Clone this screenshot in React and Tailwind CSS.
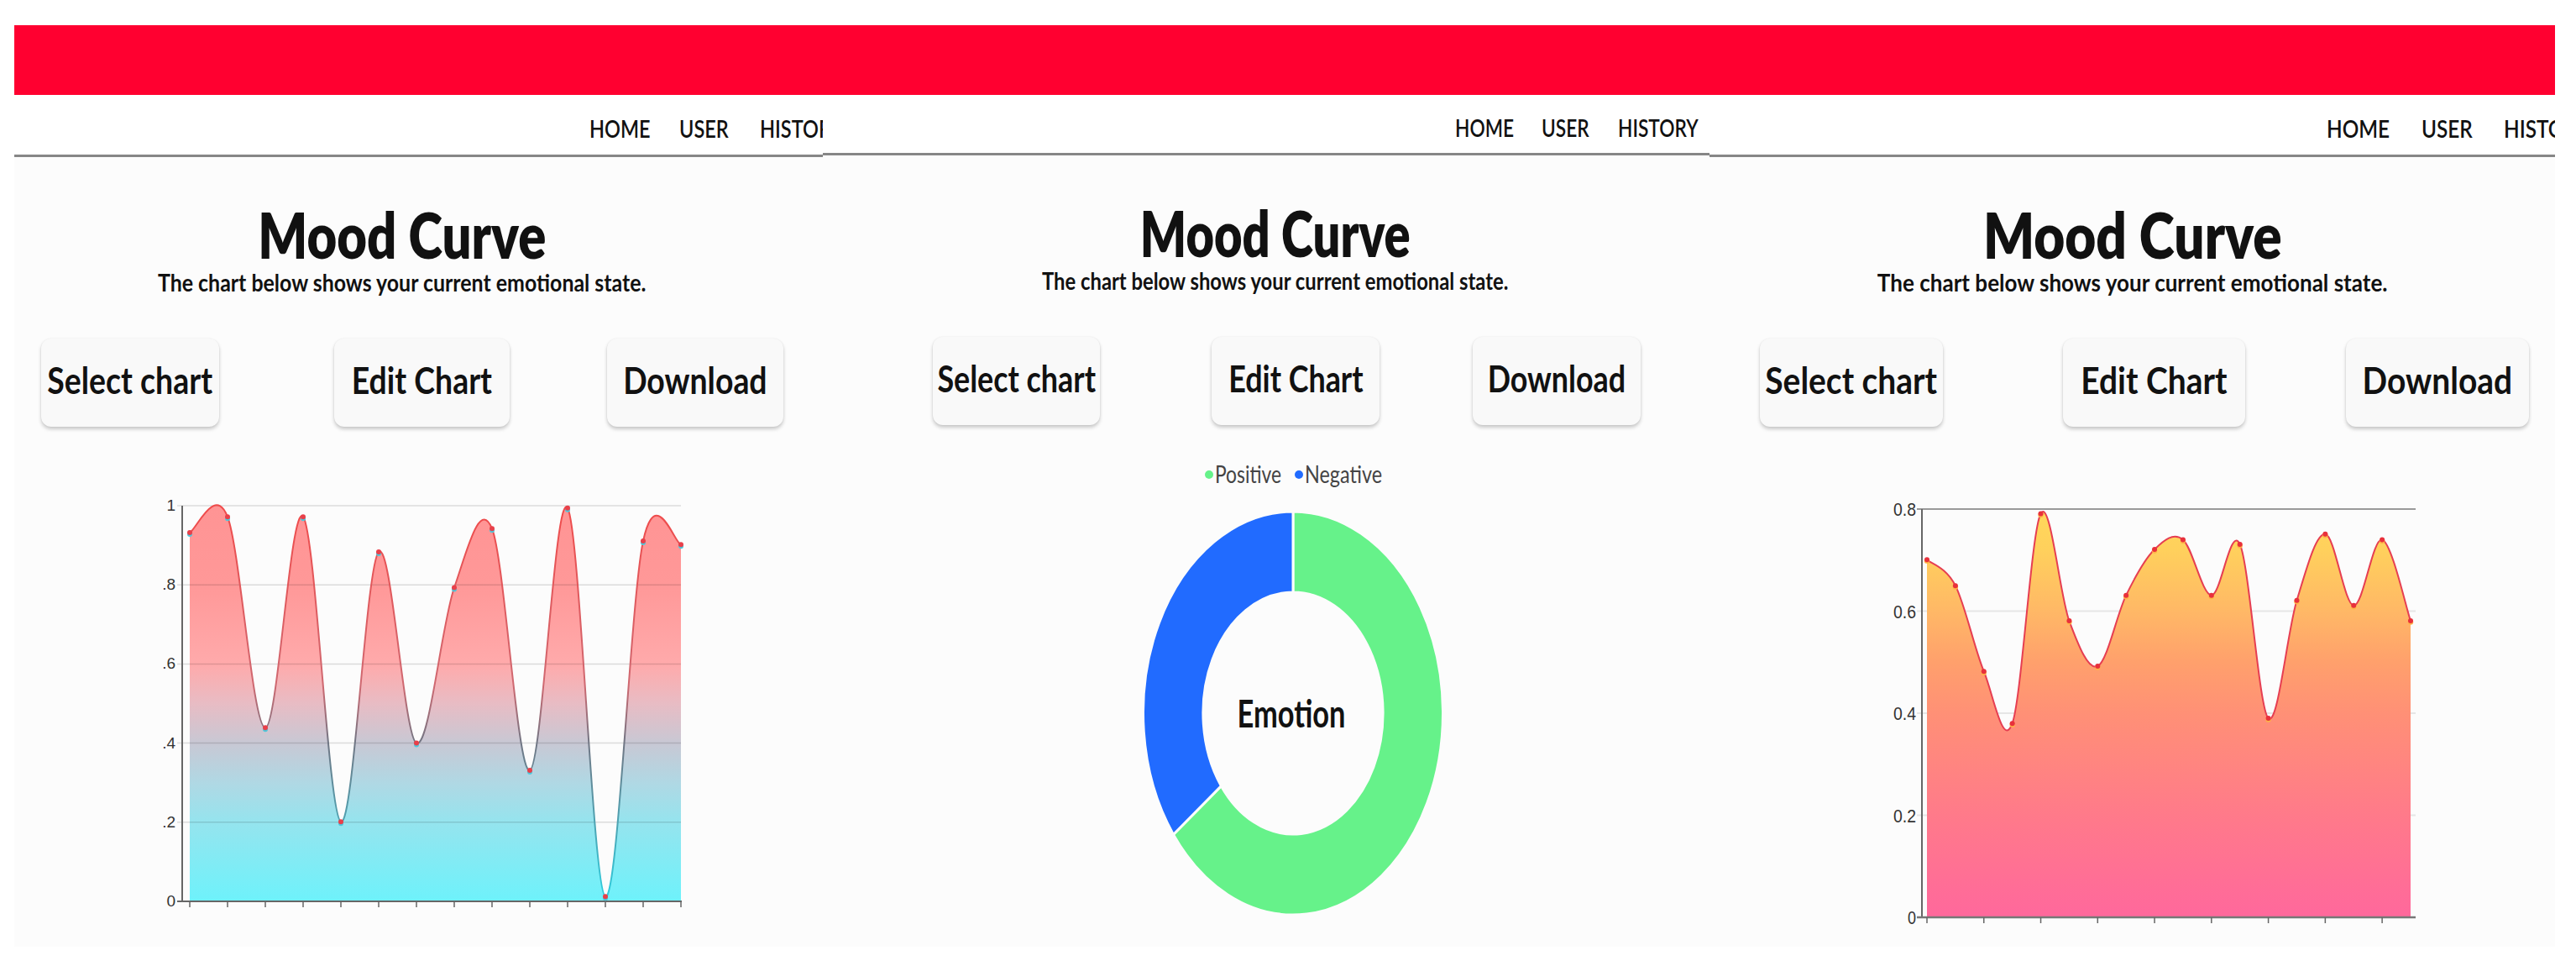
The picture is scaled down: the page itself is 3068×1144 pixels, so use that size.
import React from 'react'

// three phone screens of the same page, side by side
const panels = [
  {
    w: 'w-[963px]',
    navH: 'h-[74px]',
    navPl: 'pl-[685px]',
    navW: ['w-[107px]', 'w-[96px]', 'w-[120px]'],
    sx: 'scale-x-[0.81]',
    navSx: 'scale-x-[0.84]',
    subSx: 'scale-x-[0.89]',
    btnSx: 'scale-x-[0.85]',
    head: 'pr-[40px]',
    btnPl: 'pl-[32px]',
    btns: [
      ['w-[212px]', ''],
      ['w-[209px]', 'ml-[137px]'],
      ['w-[210px]', 'ml-[116px]'],
    ],
  },
  {
    w: 'w-[1056px]',
    navH: 'h-[72px]',
    navPl: 'pl-[753px]',
    navW: ['w-[103px]', 'w-[91px]', 'w-[120px]'],
    sx: 'scale-x-[0.76]',
    navSx: 'scale-x-[0.81]',
    subSx: 'scale-x-[0.85]',
    btnSx: 'scale-x-[0.815]',
    head: 'pl-[22px]',
    btnPl: 'pl-[131px]',
    btns: [
      ['w-[199px]', ''],
      ['w-[200px]', 'ml-[133px]'],
      ['w-[200px]', 'ml-[111px]'],
    ],
  },
  {
    w: 'w-[1007px]',
    navH: 'h-[74px]',
    navPl: 'pl-[735px]',
    navW: ['w-[113px]', 'w-[98px]', 'w-[120px]'],
    sx: 'scale-x-[0.84]',
    navSx: 'scale-x-[0.87]',
    subSx: 'scale-x-[0.93]',
    btnSx: 'scale-x-[0.885]',
    head: '',
    btnPl: 'pl-[60px]',
    btns: [
      ['w-[218px]', ''],
      ['w-[217px]', 'ml-[143px]'],
      ['w-[218px]', 'ml-[120px]'],
    ],
  },
]

const spline = (pts) => {
  let d = `M${pts[0][0]},${pts[0][1]}`
  for (let i = 0; i < pts.length - 1; i++) {
    const p0 = pts[i - 1] || pts[i]
    const p1 = pts[i]
    const p2 = pts[i + 1]
    const p3 = pts[i + 2] || p2
    const c1 = [p1[0] + (p2[0] - p0[0]) / 6, p1[1] + (p2[1] - p0[1]) / 6]
    const c2 = [p2[0] - (p3[0] - p1[0]) / 6, p2[1] - (p3[1] - p1[1]) / 6]
    d += ` C${c1[0]},${c1[1]} ${c2[0]},${c2[1]} ${p2[0]},${p2[1]}`
  }
  return d
}

const moodA = [0.932, 0.972, 0.439, 0.972, 0.201, 0.883, 0.4, 0.793, 0.942, 0.331, 0.994, 0.012, 0.911, 0.902]
const moodB = [0.701, 0.65, 0.482, 0.38, 0.791, 0.581, 0.492, 0.631, 0.721, 0.74, 0.631, 0.731, 0.39, 0.621, 0.751, 0.611, 0.74, 0.581]

const CyanChart = () => {
  const zero = 565
  const top = 94
  const ppu = zero - top
  const pts = moodA.map((v, i) => [209 + i * 45, zero - v * ppu])
  const line = spline(pts)
  const area = `${line} L794,${zero} L209,${zero}Z`
  const grid = [1, 0.8, 0.6, 0.4, 0.2]
  return (
    <svg width="963" height="617" className="block">
      <defs>
        <linearGradient id="fillA" gradientUnits="userSpaceOnUse" x1="0" y1={top} x2="0" y2={zero}>
          <stop offset="0" stopColor="#ff9494" />
          <stop offset="0.2" stopColor="#ff9898" />
          <stop offset="0.4" stopColor="#ffaaab" />
          <stop offset="0.5" stopColor="#e8bcc4" />
          <stop offset="0.6" stopColor="#c8c8d4" />
          <stop offset="0.7" stopColor="#b0d8e4" />
          <stop offset="0.8" stopColor="#95e4ee" />
          <stop offset="1" stopColor="#6ef2fb" />
        </linearGradient>
        <linearGradient id="lineA" gradientUnits="userSpaceOnUse" x1="0" y1={top} x2="0" y2={zero}>
          <stop offset="0" stopColor="#f04a4a" />
          <stop offset="0.45" stopColor="#d06870" />
          <stop offset="0.6" stopColor="#707684" />
          <stop offset="1" stopColor="#2ccfe0" />
        </linearGradient>
      </defs>
      <path d={area} fill="url(#fillA)" />
      {grid.map((g) => (
        <line key={g} x1="194" x2="794" y1={zero - g * ppu} y2={zero - g * ppu} stroke="rgba(0,0,0,0.13)" strokeWidth="1.5" />
      ))}
      <path d={line} fill="none" stroke="url(#lineA)" strokeWidth="2" />
      <line x1="200" x2="200" y1={top} y2={zero} stroke="#666" strokeWidth="2" />
      <line x1="194" x2="795" y1={zero} y2={zero} stroke="#666" strokeWidth="2" />
      {pts.map(([x]) => (
        <line key={x} x1={x} x2={x} y1={zero} y2={zero + 7} stroke="#666" strokeWidth="1.5" />
      ))}
      {['1', '.8', '.6', '.4', '.2', '0'].map((t, i) => (
        <text key={t} x="192" y={top + i * (ppu / 5) + 6} textAnchor="end" fontSize="19" fill="#333" fontFamily="Liberation Sans, sans-serif">
          {t}
        </text>
      ))}
      {pts.map(([x, y]) => (
        <g key={x}>
          <circle cx={x} cy={y + 2} r="3" fill="#4cc8dc" />
          <circle cx={x} cy={y} r="3" fill="#e8404a" />
        </g>
      ))}
    </svg>
  )
}

const WarmChart = () => {
  const zero = 584
  const top = 98
  const ppu = (zero - top) / 0.8
  const step = 576 / 17
  const pts = moodB.map((v, i) => [259 + i * step, zero - v * ppu])
  const line = spline(pts)
  const area = `${line} L835,${zero} L259,${zero}Z`
  return (
    <svg width="1007" height="617" className="block">
      <defs>
        <linearGradient id="fillB" gradientUnits="userSpaceOnUse" x1="0" y1={top} x2="0" y2={zero}>
          <stop offset="0" stopColor="#ffd85a" />
          <stop offset="0.1" stopColor="#ffd05c" />
          <stop offset="0.25" stopColor="#ffb866" />
          <stop offset="0.375" stopColor="#ffa06c" />
          <stop offset="0.5" stopColor="#ff9076" />
          <stop offset="0.75" stopColor="#ff7a8a" />
          <stop offset="1" stopColor="#ff689c" />
        </linearGradient>
      </defs>
      {[0.6, 0.4, 0.2].map((g) => (
        <line key={g} x1="247" x2="841" y1={zero - g * ppu} y2={zero - g * ppu} stroke="#e6e6e6" strokeWidth="2" />
      ))}
      <line x1="247" x2="841" y1={top} y2={top} stroke="#9a9a9a" strokeWidth="2" />
      <path d={area} fill="url(#fillB)" />
      <path d={line} fill="none" stroke="#e63e52" strokeWidth="2" />
      <line x1="253" x2="253" y1={top} y2={zero} stroke="#666" strokeWidth="2" />
      <line x1="247" x2="841" y1={zero} y2={zero} stroke="#777" strokeWidth="2.5" />
      {pts.filter((_, i) => i % 2 === 0).map(([x]) => (
        <line key={x} x1={x} x2={x} y1={zero} y2={zero + 7} stroke="#666" strokeWidth="1.5" />
      ))}
      {['0.8', '0.6', '0.4', '0.2', '0'].map((t, i) => (
        <text
          key={t}
          x="246"
          y={top + i * 121.5 + 8}
          textAnchor="end"
          fontSize="22"
          fill="#333"
          fontFamily="Liberation Sans, sans-serif"
          textLength={t.length > 1 ? 27 : 10}
          lengthAdjust="spacingAndGlyphs"
        >
          {t}
        </text>
      ))}
      {pts.map(([x, y]) => (
        <g key={x}>
          <circle cx={x} cy={y + 1.5} r="3.2" fill="#ffb347" />
          <circle cx={x} cy={y} r="3" fill="#e8303c" />
        </g>
      ))}
    </svg>
  )
}

const ring = (a0, a1) => {
  const p = (a, r) => [Math.sin(a) * r, -Math.cos(a) * r]
  const large = a1 - a0 > Math.PI ? 1 : 0
  const [ax, ay] = p(a0, 1)
  const [bx, by] = p(a1, 1)
  const [cx, cy] = p(a1, 0.6)
  const [dx, dy] = p(a0, 0.6)
  return `M${ax} ${ay} A1 1 0 ${large} 1 ${bx} ${by} L${cx} ${cy} A0.6 0.6 0 ${large} 0 ${dx} ${dy}Z`
}

const EmotionDonut = () => {
  const split = (233 / 180) * Math.PI
  return (
    <svg width="1056" height="617" className="block">
      <circle cx="460" cy="59" r="5" fill="#66f28a" />
      <text x="467" y="69" fontSize="28" fill="#444" fontFamily="Lato, sans-serif" textLength="79" lengthAdjust="spacingAndGlyphs">
        Positive
      </text>
      <circle cx="567" cy="59" r="5" fill="#216bff" />
      <text x="574" y="69" fontSize="28" fill="#444" fontFamily="Lato, sans-serif" textLength="92" lengthAdjust="spacingAndGlyphs">
        Negative
      </text>
      <g transform="translate(560 343) scale(178.5 240)">
        <path d={ring(0, split)} fill="#66f28a" stroke="#fcfcfc" strokeWidth="3" vectorEffect="non-scaling-stroke" strokeLinejoin="round" />
        <path d={ring(split, Math.PI * 2)} fill="#216bff" stroke="#fcfcfc" strokeWidth="3" vectorEffect="non-scaling-stroke" strokeLinejoin="round" />
      </g>
      <text x="558" y="360" textAnchor="middle" fontSize="45" fontWeight="700" fill="#111" fontFamily="Lato, sans-serif" textLength="129" lengthAdjust="spacingAndGlyphs">
        Emotion
      </text>
    </svg>
  )
}

const Panel = ({ cfg, children }) => (
  <div className={`${cfg.w} h-[1097px] shrink-0 flex flex-col overflow-hidden bg-[#fcfcfc] font-['Lato',sans-serif] text-[#111]`}>
    <div className="h-[83px] shrink-0 bg-[#ff0030]" />
    <nav className={`${cfg.navH} ${cfg.navPl} shrink-0 flex items-center pt-[8px] bg-white border-b-[3px] border-[#868686] text-[28px] font-semibold whitespace-nowrap`}>
      {['HOME', 'USER', 'HISTORY'].map((t, i) => (
        <span key={t} className={`${cfg.navW[i]} shrink-0`}>
          <span className={`inline-block origin-left ${cfg.navSx}`}>{t}</span>
        </span>
      ))}
    </nav>
    <div className={`${cfg.head} mt-[54px] flex flex-col items-center whitespace-nowrap`}>
      <h1 className={`inline-block text-[76px] leading-[75px] font-extrabold ${cfg.sx}`}>Mood Curve</h1>
      <p className={`inline-block mt-[6px] text-[28px] leading-[28px] font-bold ${cfg.subSx}`}>
        The chart below shows your current emotional state.
      </p>
    </div>
    <div className={`${cfg.btnPl} mt-[53px] h-[105px] shrink-0 flex`}>
      {['Select chart', 'Edit Chart', 'Download'].map((t, i) => (
        <button
          key={t}
          className={`${cfg.btns[i][0]} ${cfg.btns[i][1]} h-[105px] shrink-0 flex items-center justify-center pb-[8px] rounded-[12px] bg-[#f9f9f9] shadow-[0_3px_4px_rgba(0,0,0,0.2),0_0_2px_rgba(0,0,0,0.08)] text-[44px] font-bold whitespace-nowrap`}
        >
          <span className={`inline-block ${cfg.btnSx}`}>{t}</span>
        </button>
      ))}
    </div>
    <div className="flex-1">{children}</div>
  </div>
)

export default function App() {
  return (
    <div className="w-[3068px] h-[1144px] bg-white pt-[30px] pl-[17px] flex items-start overflow-hidden">
      <Panel cfg={panels[0]}>
        <CyanChart />
      </Panel>
      <Panel cfg={panels[1]}>
        <EmotionDonut />
      </Panel>
      <Panel cfg={panels[2]}>
        <WarmChart />
      </Panel>
    </div>
  )
}
